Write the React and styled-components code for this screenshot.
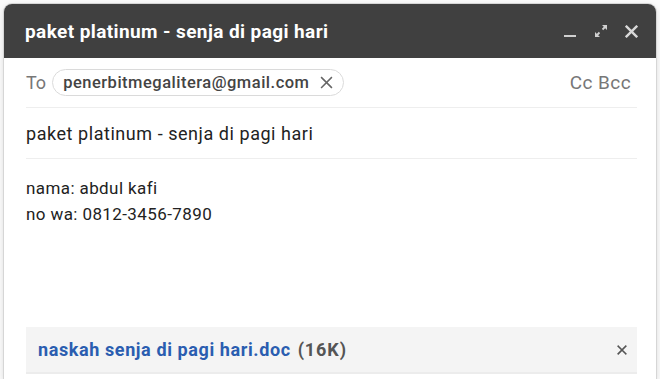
import React from "react";
import styled, { createGlobalStyle } from "styled-components";

const GlobalStyle = createGlobalStyle`
  html, body {
    margin: 0;
    padding: 0;
    background: #fafafa;
    font-family: Roboto, "Liberation Sans", Arial, sans-serif;
  }
`;

const Page = styled.div`
  width: 660px;
  height: 379px;
  padding: 4px 4px 0 4px;
  box-sizing: border-box;
  overflow: hidden;
`;

const Window = styled.div`
  height: 100%;
  background: #fff;
  border-radius: 8px 8px 0 0;
  box-shadow: 0 0 0 1px #d6d6d6, 0 2px 6px rgba(0, 0, 0, 0.15);
  display: flex;
  flex-direction: column;
  overflow: hidden;
`;

const Header = styled.div`
  height: 54px;
  background: #404040;
  display: flex;
  align-items: center;
  justify-content: space-between;
  padding: 0 18px 0 21px;
  flex-shrink: 0;
`;

const Title = styled.div`
  color: #fff;
  font-size: 19px;
  font-weight: 700;
  letter-spacing: 0.4px;
`;

const HeaderIcons = styled.div`
  display: flex;
  align-items: center;
  gap: 17px;
`;

const Body = styled.div`
  flex: 1;
  display: flex;
  flex-direction: column;
  padding: 0 19px 0 22px;
`;

const Row = styled.div`
  height: ${(p) => p.h}px;
  display: flex;
  align-items: center;
  border-bottom: 1px solid #eeeeee;
  flex-shrink: 0;
`;

const Label = styled.span`
  color: #777;
  font-size: 18px;
  margin-right: 6px;
`;

const Chip = styled.div`
  display: flex;
  align-items: center;
  height: 25px;
  border: 1px solid #dadada;
  border-radius: 14px;
  padding: 0 10px 0 10px;
  gap: 11px;
  color: #444;
  font-size: 16.5px;
  font-weight: 500;
  letter-spacing: 0.5px;
`;

const CcBcc = styled.span`
  margin-left: auto;
  margin-right: 6px;
  color: #777;
  font-size: 19px;
  letter-spacing: 0.4px;
`;

const Subject = styled.div`
  color: #222;
  font-size: 18px;
  letter-spacing: 0.55px;
`;

const Message = styled.div`
  padding-top: 16px;
  color: #222;
  font-size: 17px;
  letter-spacing: 0.4px;
  line-height: 26px;
  flex: 1;
`;

const Attachment = styled.div`
  height: 45px;
  margin-bottom: 5px;
  background: #f4f4f4;
  display: flex;
  align-items: center;
  justify-content: space-between;
  padding: 0 10px 0 12px;
  border-bottom: 2px solid #ececec;
  flex-shrink: 0;
`;

const FileName = styled.span`
  color: #2a5db0;
  font-size: 18px;
  font-weight: 700;
  letter-spacing: 0.6px;
  margin-right: 7px;
`;

const FileSize = styled.span`
  color: #555;
  font-size: 18px;
  font-weight: 700;
  letter-spacing: 0.9px;
`;

const Cross = ({ size = 12, color = "#ddd", width = 2.2 }) => (
  <svg width={size} height={size} viewBox="0 0 12 12">
    <path d="M1.5 1.5 L10.5 10.5 M10.5 1.5 L1.5 10.5" stroke={color} strokeWidth={width} strokeLinecap="square" />
  </svg>
);

export default function App() {
  return (
    <Page>
      <GlobalStyle />
      <Window>
        <Header>
          <Title>paket platinum - senja di pagi hari</Title>
          <HeaderIcons>
            <svg width="14" height="14" viewBox="0 0 14 14">
              <rect x="1" y="11" width="12" height="2" fill="#d0d0d0" />
            </svg>
            <svg width="14" height="14" viewBox="0 0 14 14">
              <path d="M8 1 H13 V6 Z M6 13 H1 V8 Z" fill="#d0d0d0" />
              <path d="M12 2 L8.5 5.5 M2 12 L5.5 8.5" stroke="#d0d0d0" strokeWidth="1.8" />
            </svg>
            <Cross size={13} color="#d8d8d8" />
          </HeaderIcons>
        </Header>
        <Body>
          <Row h={49}>
            <Label>To</Label>
            <Chip>
              penerbitmegalitera@gmail.com
              <Cross size={13} color="#666" width={1.4} />
            </Chip>
            <CcBcc>Cc Bcc</CcBcc>
          </Row>
          <Row h={50}>
            <Subject>paket platinum - senja di pagi hari</Subject>
          </Row>
          <Message>
            nama: abdul kafi
            <br />
            no wa: 0812-3456-7890
          </Message>
          <Attachment>
            <span>
              <FileName>naskah senja di pagi hari.doc</FileName>
              <FileSize>(16K)</FileSize>
            </span>
            <Cross size={10} color="#555" width={2} />
          </Attachment>
        </Body>
      </Window>
    </Page>
  );
}
